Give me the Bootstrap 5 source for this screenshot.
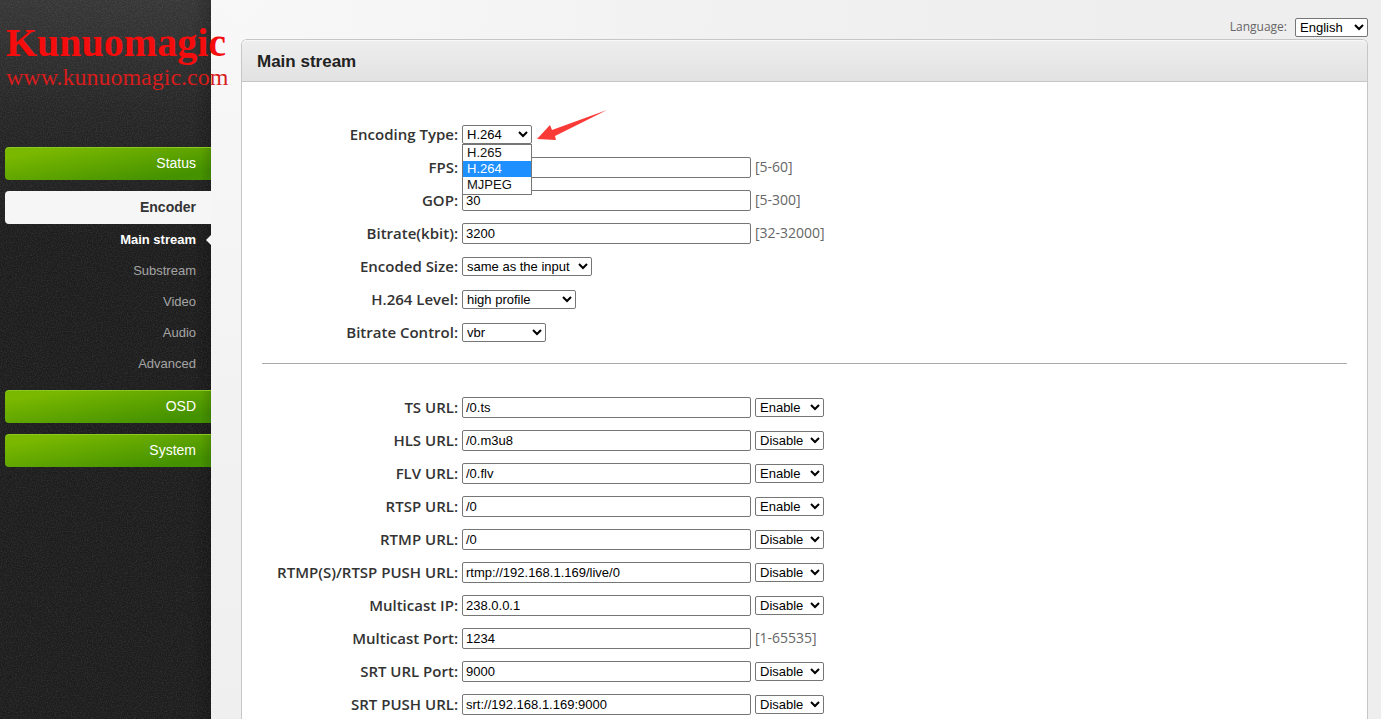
<!DOCTYPE html>
<html lang="en">
<head>
<meta charset="utf-8">
<meta name="viewport" content="width=device-width, initial-scale=1">
<title>Encoder - Main stream</title>
<link href="https://cdn.jsdelivr.net/npm/bootstrap@5.3.0/dist/css/bootstrap.min.css" rel="stylesheet">
<style>
  body {
    font-family: "Open Sans", "Noto Sans", sans-serif;
    font-size: 14px;
    color: #333;
    background: radial-gradient(circle at 240px 0, #f8f8f8 0, #f1f1f1 500px, #eee 900px);
    overflow-x: hidden;
  }
  .side {
    width: 211px;
    padding-left: 5px;
    font-family: "Liberation Sans", Arial, sans-serif;
    background:
      url("data:image/svg+xml,%3Csvg xmlns='http://www.w3.org/2000/svg' width='200' height='200'%3E%3Cfilter id='n'%3E%3CfeTurbulence type='fractalNoise' baseFrequency='.8' numOctaves='2' stitchTiles='stitch'/%3E%3CfeColorMatrix values='0 0 0 0 1 0 0 0 0 1 0 0 0 0 1 .5 0 0 0 -.2'/%3E%3C/filter%3E%3Crect width='200' height='200' filter='url(%23n)' opacity='.4'/%3E%3C/svg%3E"),
      linear-gradient(90deg, transparent 192px, rgba(0,0,0,.2) 211px),
      linear-gradient(#363636 0, #262626 110px, #1d1d1d 240px, #1d1d1d 100%);
  }
  .brand { height: 147px; padding: 20px 0 0 1px; font-family: "Liberation Serif", "Times New Roman", serif; color: #f50d0d; white-space: nowrap; position: relative; z-index: 1; }
  .brand-name { font-size: 40px; line-height: 46px; font-weight: 700; }
  .brand-site { font-size: 24px; line-height: 22px; color: #d81c1c; }
  .menu-head {
    height: 33px; line-height: 32px; margin-bottom: 11px; padding-right: 15px;
    border-radius: 4px 0 0 4px; text-align: right; color: #fff; text-decoration: none;
    background: linear-gradient(90deg, transparent 195px, rgba(0,0,0,.12)), linear-gradient(170deg, #7ab800 15%, #459200 85%);
    box-shadow: inset 0 1px #8cc920;
  }
  .menu-head.open { margin-bottom: 0; color: #333; font-weight: 700; background: #f6f6f6; box-shadow: none; }
  .sub-menu { padding-bottom: 11px; }
  .sub-link { height: 31px; line-height: 31px; padding-right: 15px; text-align: right; font-size: 13px; color: #a5a5a5; text-decoration: none; position: relative; }
  .sub-link.active { color: #fff; font-weight: 700; }
  .sub-link.active::after { content: ""; position: absolute; right: 0; top: 11px; border: 5px solid transparent; border-left: 0; border-right-color: #f6f6f6; }
  .content-area { padding: 0 13px 0 30px; }
  .topbar { height: 39px; padding-top: 15px; font-size: 12px; color: #666; }
  .panel { border: 1px solid #c6c6c6; border-bottom: 0; border-radius: 6px 6px 0 0; background: #fff; }
  .panel-title { height: 42px; padding-left: 15px; font: 700 17px/43px "Liberation Sans", Arial, sans-serif; color: #222; border-bottom: 1px solid #c6c6c6; border-radius: 5px 5px 0 0; background: linear-gradient(#eee, #e2e2e2); box-shadow: inset 0 1px #f8f8f8; }
  .panel-form { padding: 36px 20px 0; }
  .field { height: 33px; gap: 4px; }
  .field-label { width: 196px; padding-bottom: 2px; text-align: right; font-size: 15px; font-weight: 600; white-space: nowrap; line-height: 20px; }
  .hint { padding-bottom: 2px; font-size: 14px; color: #666; }
  select, input { font-family: "Liberation Sans", Arial, sans-serif !important; font-size: 13px !important; color: #000; border: 1px solid #767676; background-color: #fff; }
  select { height: 19px; border-radius: 2px; padding: 0; }
  input { width: 289px; height: 21px; border-radius: 2px; padding: 1px 3px; }
  .w-lang { width: 73px; } .w-type { width: 70px; } .w-state { width: 69px; }
  .w-size { width: 130px; } .w-level { width: 114px; } .w-rate { width: 84px; }
  .options { position: absolute; top: 100%; left: 0; right: 0; z-index: 2; padding: 0 0 1px; margin: 0; list-style: none; background: #fff; border: 1px solid #767676; font: 13px/16px "Liberation Sans", Arial, sans-serif; color: #111; }
  .options li { padding-left: 4px; height: 16px; }
  .options .picked { background: #1e90ff; color: #fff; }
  .pointer-arrow { position: absolute; left: 74px; top: -17px; }
  .divider { margin: 14px 0 27px; border-top: 1px solid #aaa; opacity: 1; }
</style>
</head>
<body>
<div class="d-flex min-vh-100">
  <nav class="side flex-shrink-0">
    <div class="brand">
      <div class="brand-name">Kunuomagic</div>
      <div class="brand-site">www.kunuomagic.com</div>
    </div>
    <a class="menu-head d-block" href="#">Status</a>
    <a class="menu-head open d-block" href="#">Encoder</a>
    <div class="sub-menu">
      <a class="sub-link active d-block" href="#">Main stream</a>
      <a class="sub-link d-block" href="#">Substream</a>
      <a class="sub-link d-block" href="#">Video</a>
      <a class="sub-link d-block" href="#">Audio</a>
      <a class="sub-link d-block" href="#">Advanced</a>
    </div>
    <a class="menu-head d-block" href="#">OSD</a>
    <a class="menu-head d-block" href="#">System</a>
  </nav>
  <main class="content-area flex-grow-1 d-flex flex-column">
    <div class="topbar d-flex justify-content-end align-items-center gap-2">
      <label for="lang">Language:</label>
      <select id="lang" class="w-lang"><option>English</option></select>
    </div>
    <section class="panel flex-grow-1">
      <h1 class="panel-title mb-0">Main stream</h1>
      <form class="panel-form">
        <div class="field d-flex align-items-center">
          <label class="field-label" for="type">Encoding Type:</label>
          <div class="position-relative d-flex">
            <select id="type" class="w-type"><option>H.265</option><option selected>H.264</option><option>MJPEG</option></select>
            <ul class="options"><li>H.265</li><li class="picked">H.264</li><li>MJPEG</li></ul>
            <svg class="pointer-arrow" width="74" height="36" viewBox="0 0 74 36" aria-hidden="true"><path d="M1 31 14 17 16 22 71 2 19 28 20 32Z" fill="#f93a37"/></svg>
          </div>
        </div>
        <div class="field d-flex align-items-center"><label class="field-label" for="fps">FPS:</label><input id="fps" type="text" value=""><span class="hint">[5-60]</span></div>
        <div class="field d-flex align-items-center"><label class="field-label" for="gop">GOP:</label><input id="gop" type="text" value="30"><span class="hint">[5-300]</span></div>
        <div class="field d-flex align-items-center"><label class="field-label" for="bitrate">Bitrate(kbit):</label><input id="bitrate" type="text" value="3200"><span class="hint">[32-32000]</span></div>
        <div class="field d-flex align-items-center"><label class="field-label" for="size">Encoded Size:</label><select id="size" class="w-size"><option>same as the input</option></select></div>
        <div class="field d-flex align-items-center"><label class="field-label" for="level">H.264 Level:</label><select id="level" class="w-level"><option>high profile</option></select></div>
        <div class="field d-flex align-items-center"><label class="field-label" for="control">Bitrate Control:</label><select id="control" class="w-rate"><option>vbr</option></select></div>
        <hr class="divider">
        <div class="field d-flex align-items-center"><label class="field-label" for="ts">TS URL:</label><input id="ts" type="text" value="/0.ts"><select class="w-state" aria-label="TS state"><option>Enable</option><option>Disable</option></select></div>
        <div class="field d-flex align-items-center"><label class="field-label" for="hls">HLS URL:</label><input id="hls" type="text" value="/0.m3u8"><select class="w-state" aria-label="HLS state"><option>Disable</option><option>Enable</option></select></div>
        <div class="field d-flex align-items-center"><label class="field-label" for="flv">FLV URL:</label><input id="flv" type="text" value="/0.flv"><select class="w-state" aria-label="FLV state"><option>Enable</option><option>Disable</option></select></div>
        <div class="field d-flex align-items-center"><label class="field-label" for="rtsp">RTSP URL:</label><input id="rtsp" type="text" value="/0"><select class="w-state" aria-label="RTSP state"><option>Enable</option><option>Disable</option></select></div>
        <div class="field d-flex align-items-center"><label class="field-label" for="rtmp">RTMP URL:</label><input id="rtmp" type="text" value="/0"><select class="w-state" aria-label="RTMP state"><option>Disable</option><option>Enable</option></select></div>
        <div class="field d-flex align-items-center"><label class="field-label" for="push">RTMP(S)/RTSP PUSH URL:</label><input id="push" type="text" value="rtmp://192.168.1.169/live/0"><select class="w-state" aria-label="Push state"><option>Disable</option><option>Enable</option></select></div>
        <div class="field d-flex align-items-center"><label class="field-label" for="mip">Multicast IP:</label><input id="mip" type="text" value="238.0.0.1"><select class="w-state" aria-label="Multicast state"><option>Disable</option><option>Enable</option></select></div>
        <div class="field d-flex align-items-center"><label class="field-label" for="mport">Multicast Port:</label><input id="mport" type="text" value="1234"><span class="hint">[1-65535]</span></div>
        <div class="field d-flex align-items-center"><label class="field-label" for="srtport">SRT URL Port:</label><input id="srtport" type="text" value="9000"><select class="w-state" aria-label="SRT state"><option>Disable</option><option>Enable</option></select></div>
        <div class="field d-flex align-items-center"><label class="field-label" for="srtpush">SRT PUSH URL:</label><input id="srtpush" type="text" value="srt://192.168.1.169:9000"><select class="w-state" aria-label="SRT push state"><option>Disable</option><option>Enable</option></select></div>
      </form>
    </section>
  </main>
</div>
<script src="https://cdn.jsdelivr.net/npm/bootstrap@5.3.0/dist/js/bootstrap.bundle.min.js"></script>
</body>
</html>
